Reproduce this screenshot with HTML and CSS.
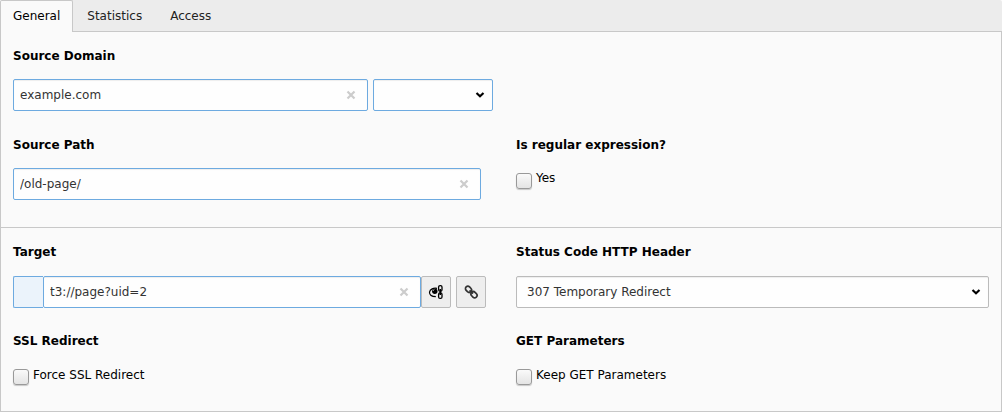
FILE: index.html
```html
<!DOCTYPE html>
<html lang="en">
<head>
<meta charset="utf-8">
<title>Redirect</title>
<link rel="stylesheet" href="styles.css">
</head>
<body>
<svg class="defs" aria-hidden="true">
  <symbol id="close" viewBox="0 0 10 10"><path d="M1.5 1.5l7 7M8.5 1.5l-7 7" fill="none" stroke="currentColor" stroke-width="2.2"/></symbol>
  <symbol id="chevron" viewBox="0 0 10 6"><path d="M1.5 1l3.5 3.2L8.500 1" fill="none" stroke="currentColor" stroke-width="2.2"/></symbol>
</svg>
<form class="editor">
  <div class="tabs" role="tablist">
    <button type="button" class="tab tab-active" role="tab" aria-selected="true">General</button>
    <button type="button" class="tab" role="tab" aria-selected="false">Statistics</button>
    <button type="button" class="tab" role="tab" aria-selected="false">Access</button>
  </div>
  <div class="panel" role="tabpanel">
    <section class="section">
      <div class="field field-wide">
        <label class="label" for="domain">Source Domain</label>
        <div class="control">
          <div class="clearable domain">
            <input class="input" id="domain" type="text" value="example.com">
            <button type="button" class="clear" aria-label="Clear"><svg><use href="#close"/></svg></button>
          </div>
          <div class="choice choice-small">
            <select class="select select-changed" aria-label="Domain presets"><option></option></select>
            <svg class="chevron"><use href="#chevron"/></svg>
          </div>
        </div>
      </div>
      <div class="field">
        <label class="label" for="path">Source Path</label>
        <div class="control">
          <div class="clearable path">
            <input class="input" id="path" type="text" value="/old-page/">
            <button type="button" class="clear" aria-label="Clear"><svg><use href="#close"/></svg></button>
          </div>
        </div>
      </div>
      <div class="field">
        <span class="label">Is regular expression?</span>
        <label class="check"><input class="box" type="checkbox"><span>Yes</span></label>
      </div>
    </section>
    <section class="section section-target">
      <div class="field">
        <label class="label" for="target">Target</label>
        <div class="control">
          <div class="group">
            <span class="addon"></span>
            <div class="clearable target">
              <input class="input" id="target" type="text" value="t3://page?uid=2">
              <button type="button" class="clear" aria-label="Clear"><svg><use href="#close"/></svg></button>
            </div>
            <button type="button" class="button" aria-label="Toggle link explanation">
              <svg class="icon" viewBox="0 0 16 16" fill="none" stroke="#000">
                <path d="M9 4.300C5.500 3.500 2 5.300 1.500 8.200C1.500 11 4.300 12.600 7.800 12.600" stroke-width="1.2"/>
                <circle cx="6.800" cy="7.200" r="2.700" fill="#000" stroke="none"/>
                <path d="M5.200 6.800a1.600 1.600 0 0 1 1.200-1.400" stroke="#eee" stroke-width=".8"/>
                <rect x="10.600" y="1.600" width="3.400" height="5.600" rx="1.500" stroke-width="1.3"/>
                <rect x="10.600" y="8.800" width="3.400" height="5.600" rx="1.500" stroke-width="1.3"/>
                <path d="M12.300 5v6" stroke-width="1.7"/>
              </svg>
            </button>
          </div>
          <button type="button" class="button" aria-label="Link browser">
            <svg class="icon" viewBox="0 0 16 16" fill="none" stroke="#333" stroke-width="1.7">
              <rect x="2.200" y="2.900" width="6.600" height="4.800" rx="2.400" transform="rotate(45 5.500 5.300)"/>
              <rect x="7.700" y="8.300" width="6.600" height="4.800" rx="2.400" transform="rotate(45 11 10.700)"/>
              <path d="M6.500 6.300l3.500 3.400"/>
            </svg>
          </button>
        </div>
      </div>
      <div class="field">
        <label class="label" for="status">Status Code HTTP Header</label>
        <div class="choice">
          <select class="select" id="status"><option>307 Temporary Redirect</option></select>
          <svg class="chevron"><use href="#chevron"/></svg>
        </div>
      </div>
      <div class="field">
        <span class="label">SSL Redirect</span>
        <label class="check"><input class="box" type="checkbox"><span>Force SSL Redirect</span></label>
      </div>
      <div class="field">
        <span class="label">GET Parameters</span>
        <label class="check"><input class="box" type="checkbox"><span>Keep GET Parameters</span></label>
      </div>
    </section>
  </div>
</form>
</body>
</html>
```
FILE: styles.css
```css
* {
  box-sizing: border-box;
}

body {
  margin: 0;
  background: #fff;
  color: #000;
  font: 12px/18px Verdana, "DejaVu Sans", sans-serif;
}

button,
input,
select {
  margin: 0;
  font: inherit;
}

.defs {
  position: absolute;
  width: 0;
  height: 0;
}

.editor {
  display: flex;
  flex-direction: column;
  min-height: 100vh;
}

.tabs {
  display: flex;
  height: 32px;
  border-bottom: 1px solid #c8c8c8;
  border-radius: 2px 2px 0 0;
  background: #ececec;
}

.tab {
  height: 32px;
  padding: 0 14px;
  border: 0;
  background: none;
  color: #222;
}

.tab-active {
  padding: 0 12px 1px;
  border: 1px solid #c8c8c8;
  border-bottom: 0;
  border-radius: 2px 2px 0 0;
  background: #fafafa;
  color: #000;
}

.panel {
  flex: 1;
  border: 1px solid #c8c8c8;
  border-top: 0;
  background: #fafafa;
}

.section {
  display: grid;
  grid-template-columns: 1fr 1fr;
  gap: 25px 30px;
  padding: 15px 12px 27px;
}

.section-target {
  row-gap: 24px;
  padding-bottom: 20px;
  border-top: 1px solid #c8c8c8;
}

.field-wide {
  grid-column: 1 / -1;
}

.label {
  display: block;
  margin-bottom: 14px;
  font-weight: bold;
}

.section-target .label {
  margin-bottom: 15px;
}

.control {
  display: flex;
  gap: 5px;
}

.group {
  display: flex;
  flex: 0 1 438px;
}

.clearable,
.choice {
  position: relative;
}

.domain {
  flex: 0 1 355px;
}

.path {
  flex: 0 1 468px;
}

.target {
  flex: 1;
}

.choice-small {
  width: 120px;
}

.input,
.select {
  display: block;
  width: 100%;
  height: 32px;
  border: 1px solid #6daae0;
  border-radius: 2px;
  background: #fefefe;
  box-shadow: inset 0 1px 1px #0001;
  color: #333;
}

.input {
  padding: 0 32px 0 6px;
}

.select {
  appearance: none;
  padding: 0 28px 0 10px;
  border-color: #bbb;
}

.select-changed {
  border-color: #6daae0;
}

.clear {
  position: absolute;
  top: 8px;
  right: 9px;
  display: grid;
  place-items: center;
  width: 16px;
  height: 16px;
  padding: 0;
  border: 0;
  background: none;
  color: #ccc;
}

.clear svg {
  width: 10px;
  height: 10px;
}

.chevron {
  position: absolute;
  top: 13px;
  right: 8px;
  width: 10px;
  height: 6px;
  pointer-events: none;
}

.addon {
  width: 30px;
  border: 1px solid #6daae0;
  border-right: 0;
  border-radius: 2px 0 0 2px;
  background: #ebf3fb;
}

.button {
  display: grid;
  place-items: center;
  width: 30px;
  height: 32px;
  padding: 0;
  border: 1px solid #bbb;
  border-radius: 2px;
  background: #eee;
}

.icon {
  width: 16px;
  height: 16px;
}

.check {
  display: flex;
  gap: 4px;
  padding-top: 5px;
  line-height: 10px;
}

.section-target .check {
  padding-top: 4px;
  line-height: 12px;
}

.box {
  appearance: none;
  width: 16px;
  height: 16px;
  border: 1px solid #999;
  border-radius: 3px;
  background: linear-gradient(#fafafa, #e4e4e4);
  box-shadow: 0 1px 1px #0003;
}

.box:checked {
  background: #6daae0;
}
```
